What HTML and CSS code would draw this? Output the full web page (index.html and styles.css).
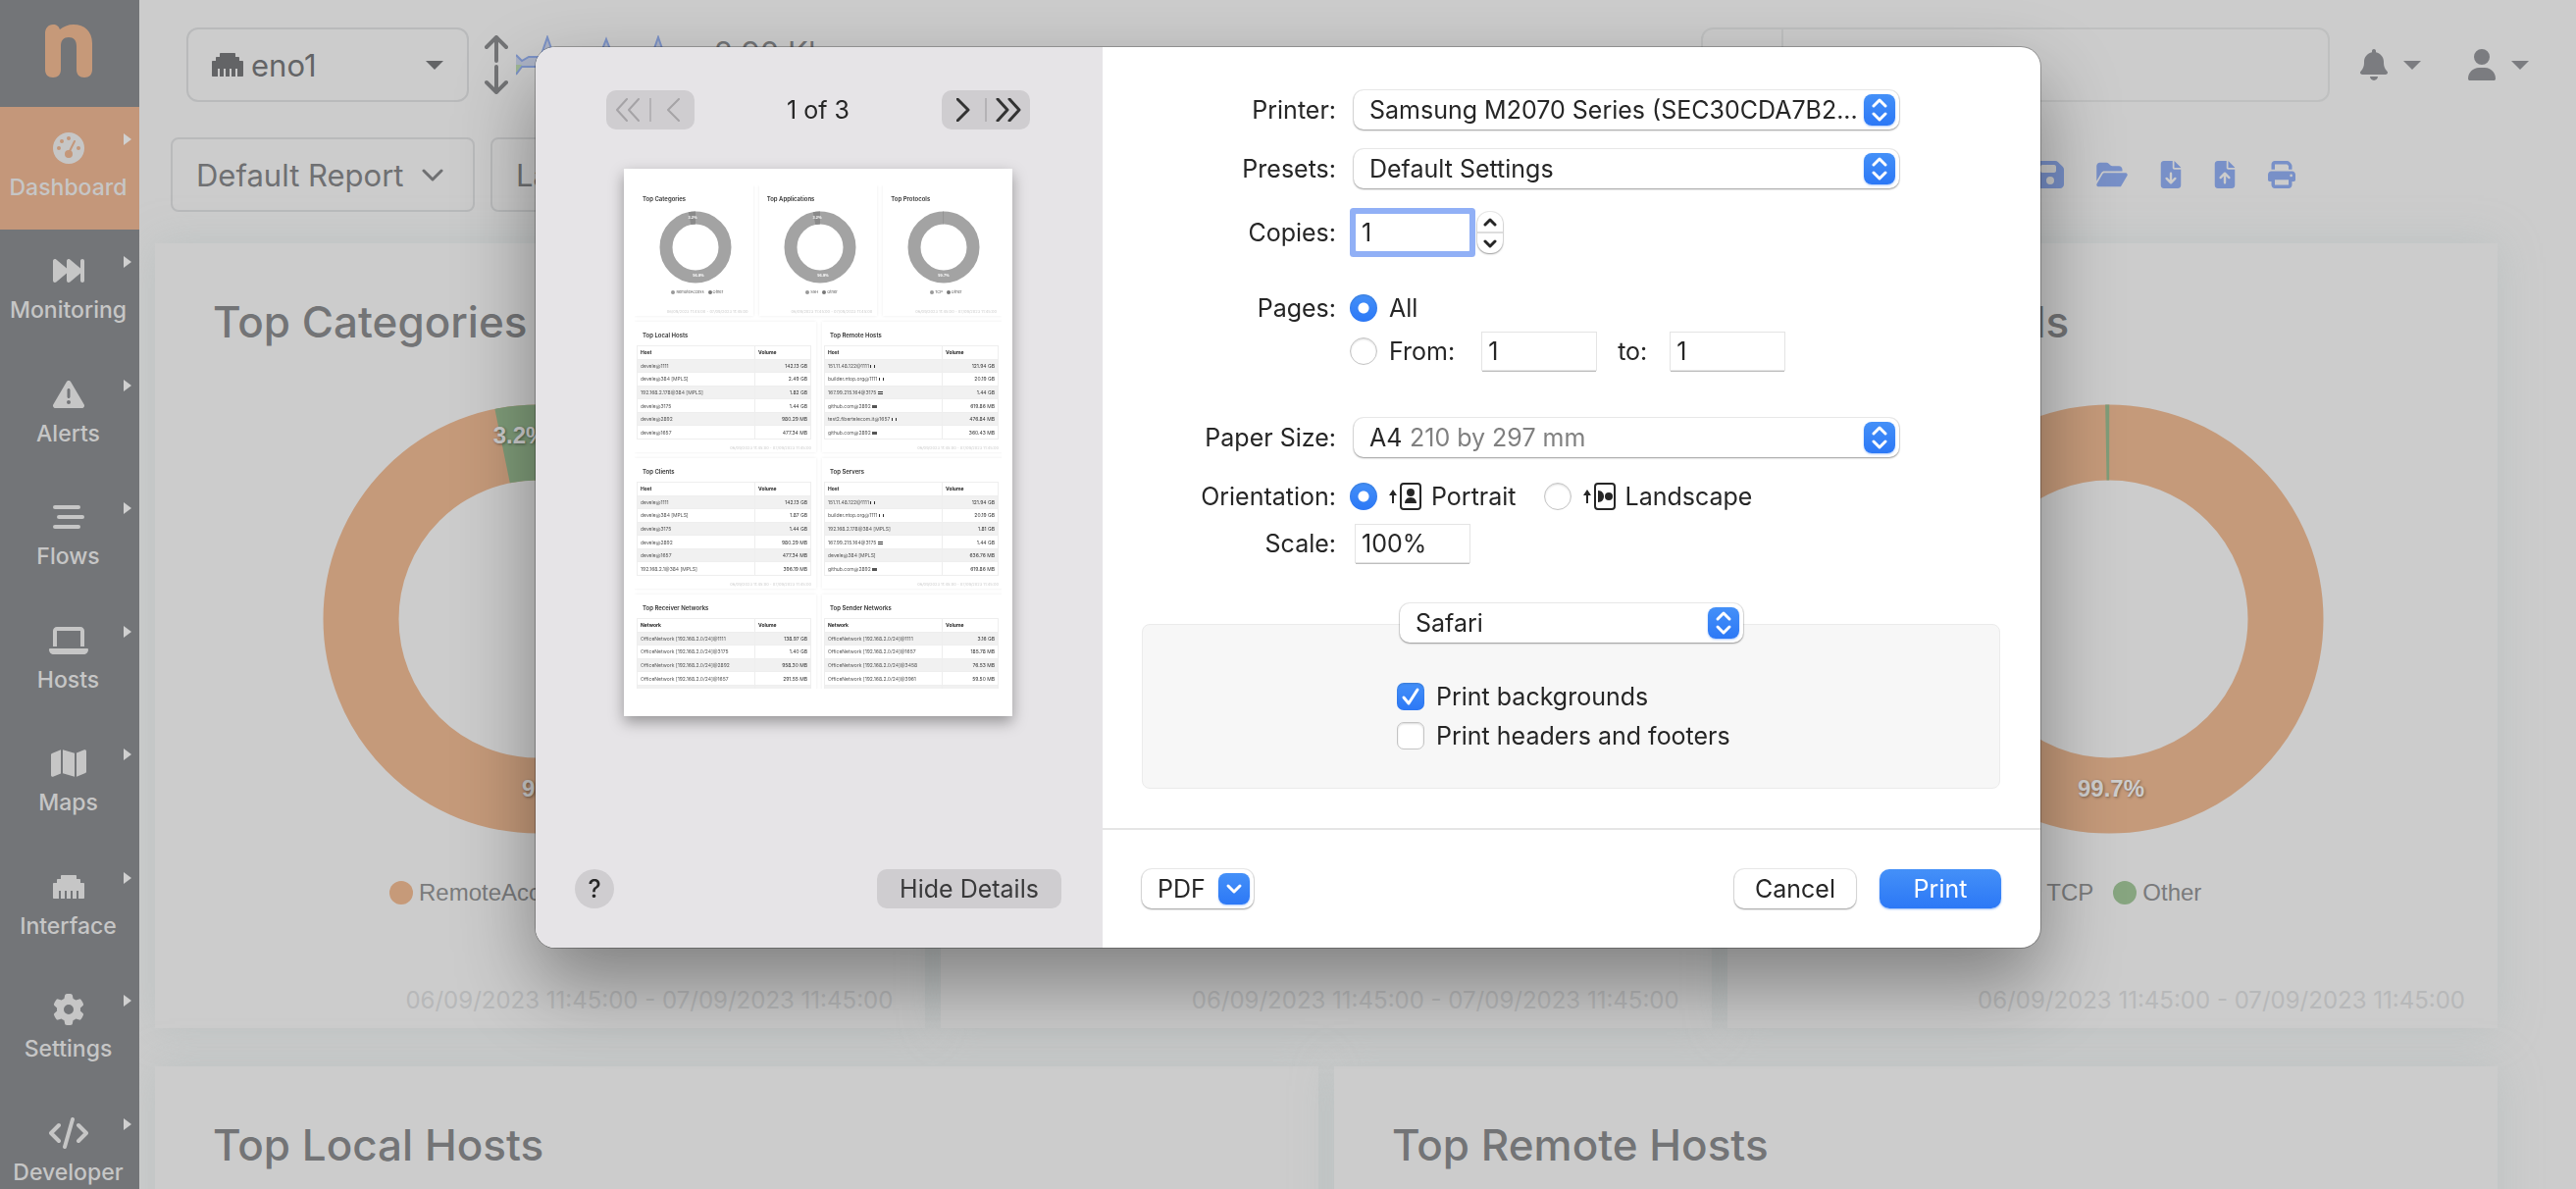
FILE: index.html
```html
<!DOCTYPE html>
<html lang="en">
<head>
<meta charset="utf-8">
<title>Dashboard</title>
<link rel="stylesheet" href="styles.css">
</head>
<body>
<svg class="sprite" aria-hidden="true">
  <symbol id="i-ethernet" viewBox="0 0 512 512"><path d="M512 208v224c0 8.800-7.200 16-16 16H416V320h-32v128h-64V320h-32v128h-64V320h-32v128h-64V320H96v128H16c-8.800 0-16-7.200-16-16V208c0-8.800 7.200-16 16-16h48v-48c0-8.800 7.200-16 16-16h48V80c0-8.800 7.200-16 16-16h224c8.800 0 16 7.200 16 16v48h48c8.800 0 16 7.200 16 16v48h48c8.800 0 16 7.200 16 16z"/></symbol>
  <symbol id="i-file" viewBox="0 0 384 512"><path d="M64 0C28.700 0 0 28.700 0 64V448c0 35.300 28.700 64 64 64H320c35.300 0 64-28.700 64-64V160H256c-17.700 0-32-14.300-32-32V0H64zM256 0V128H384L256 0z"/></symbol>
  <symbol id="i-updown" viewBox="0 0 32 32"><path d="M10 12l6-6 6 6M10 20l6 6 6-6" fill="none" stroke="#fff" stroke-width="3" stroke-linecap="round" stroke-linejoin="round"/></symbol>
</svg>

<nav class="sidebar">
  <a class="logo" href="#" aria-label="Home">
    <svg width="48" height="54" viewBox="0 0 48 54"><path d="M0 9C0 4 3 0 8 0c4 0 6 2 7 5 4-3 8-5 14-5 11 0 19 7 19 19v27c0 5-3 8-8 8s-8-3-8-8V22c0-6-3-9-8-9s-8 3-8 9v24c0 5-3 8-8 8s-8-3-8-8z"/></svg>
  </a>
  <ul class="menu">
    <li class="active"><a href="#"><svg width="32" height="32" viewBox="0 0 32 32"><circle cx="16" cy="16" r="16"/><g class="cut"><circle cx="6" cy="16" r="2"/><circle cx="9" cy="9" r="2"/><circle cx="16" cy="6" r="2"/><circle cx="26" cy="16" r="2"/><circle cx="16" cy="22" r="4"/><path d="M16 21l6-12"/></g></svg>Dashboard</a></li>
    <li><a href="#"><svg width="32" height="32" viewBox="0 0 512 512"><path d="M18.400 445c11.200 5.300 24.500 3.600 34.100-4.400L224 297.700V416c0 12.400 7.200 23.700 18.400 29s24.500 3.600 34.100-4.400L448 297.700V416c0 17.700 14.300 32 32 32s32-14.300 32-32V96c0-17.700-14.300-32-32-32s-32 14.300-32 32V214.300L276.500 71.400c-9.500-7.900-22.800-9.700-34.100-4.400S224 83.600 224 96V214.300L52.500 71.400c-9.500-7.900-22.800-9.700-34.100-4.400S0 83.600 0 96V416c0 12.400 7.200 23.700 18.400 29z"/></svg>Monitoring</a></li>
    <li><a href="#"><svg width="32" height="32" viewBox="0 0 512 512"><path d="M256 32c14.200 0 27.300 7.500 34.500 19.800l216 368c7.300 12.400 7.300 27.700 .2 40.100S486.300 480 472 480H40c-14.300 0-27.600-7.700-34.700-20.100s-7-27.800 .2-40.100l216-368C228.700 39.500 241.800 32 256 32zm0 128c-13.300 0-24 10.700-24 24V296c0 13.300 10.700 24 24 24s24-10.700 24-24V184c0-13.300-10.700-24-24-24zm32 224a32 32 0 1 0-64 0 32 32 0 1 0 64 0z"/></svg>Alerts</a></li>
    <li><a href="#"><svg width="32" height="32" viewBox="0 0 32 32"><rect x="0" y="4" width="28" height="4" rx="2"/><rect x="4" y="14" width="28" height="4" rx="2"/><rect x="0" y="24" width="28" height="4" rx="2"/></svg>Flows</a></li>
    <li><a href="#"><svg width="40" height="32" viewBox="0 0 640 512"><path d="M128 32C92.700 32 64 60.700 64 96V352h64V96H512V352h64V96c0-35.300-28.700-64-64-64H128zM19.200 384C8.600 384 0 392.600 0 403.200C0 445.600 34.400 480 76.800 480H563.200c42.400 0 76.800-34.400 76.800-76.800c0-10.600-8.600-19.200-19.200-19.200H19.200z"/></svg>Hosts</a></li>
    <li><a href="#"><svg width="36" height="32" viewBox="0 0 576 512"><path d="M384 476.100L192 421.200V35.900L384 90.800V476.100zm32-1.200V88.400L543.100 37.500c15.800-6.300 32.900 5.300 32.900 22.300V394.600c0 9.800-6 18.600-15.100 22.300L416 474.800zM15.100 95.100L160 37.200V423.600L32.900 474.500C17.100 480.800 0 469.200 0 452.200V117.400c0-9.800 6-18.600 15.100-22.300z"/></svg>Maps</a></li>
    <li><a href="#"><svg width="32" height="32"><use href="#i-ethernet"/></svg>Interface</a></li>
    <li><a href="#"><svg width="32" height="32" viewBox="0 0 512 512"><path d="M495.900 166.600c3.200 8.700 .5 18.400-6.400 24.600l-43.300 39.400c1.100 8.300 1.700 16.800 1.700 25.400s-.6 17.100-1.700 25.400l43.300 39.400c6.900 6.200 9.600 15.900 6.400 24.600c-4.400 11.900-9.700 23.300-15.800 34.300l-4.700 8.100c-6.600 11-14 21.400-22.100 31.200c-5.900 7.200-15.700 9.600-24.500 6.800l-55.700-17.700c-13.400 10.300-28.200 18.900-44 25.400l-12.500 57.100c-2 9.100-9 16.300-18.200 17.800c-13.800 2.300-28 3.500-42.500 3.500s-28.700-1.200-42.500-3.500c-9.200-1.500-16.200-8.700-18.200-17.800l-12.500-57.100c-15.800-6.500-30.600-15.100-44-25.400L83.100 425.900c-8.800 2.800-18.600 .3-24.500-6.800c-8.100-9.800-15.500-20.200-22.100-31.200l-4.700-8.100c-6.100-11-11.400-22.400-15.800-34.300c-3.200-8.700-.5-18.400 6.400-24.600l43.300-39.400C64.600 273.100 64 264.600 64 256s.6-17.100 1.700-25.400L22.400 191.200c-6.900-6.200-9.600-15.900-6.400-24.600c4.400-11.900 9.700-23.300 15.800-34.300l4.700-8.100c6.600-11 14-21.400 22.100-31.200c5.900-7.200 15.700-9.600 24.500-6.800l55.700 17.700c13.400-10.300 28.200-18.900 44-25.400l12.500-57.100c2-9.100 9-16.300 18.200-17.800C227.300 1.200 241.500 0 256 0s28.700 1.200 42.500 3.500c9.200 1.500 16.200 8.700 18.200 17.800l12.500 57.100c15.800 6.500 30.600 15.100 44 25.400l55.700-17.700c8.800-2.800 18.600-.3 24.500 6.800c8.100 9.800 15.500 20.200 22.100 31.200l4.700 8.100c6.100 11 11.400 22.400 15.800 34.300zM256 336a80 80 0 1 0 0-160 80 80 0 1 0 0 160z"/></svg>Settings</a></li>
    <li><a href="#"><svg width="40" height="32" viewBox="0 0 40 32"><path class="line" d="M10 8l-8 8 8 8M30 8l8 8-8 8M24 2l-8 28"/></svg>Developer</a></li>
  </ul>
</nav>

<main class="main">
  <header class="topbar">
    <div class="pick iface">
      <select aria-label="Interface"><option>eno1</option></select>
      <svg class="pick-icon" width="32" height="32"><use href="#i-ethernet"/></svg>
      <svg class="pick-arrow" width="18" height="9" viewBox="0 0 18 9"><path d="M0 0h18L9 9z"/></svg>
    </div>
    <div class="traffic">
      <svg width="24" height="60" viewBox="0 0 24 60"><path class="line" d="M12 26V3M2 12L12 2l10 10M12 32v25M2 48l10 10 10-10"/></svg>
      <svg width="190" height="60" viewBox="0 0 190 60"><path d="M0 20l6 6 7-4h12l7-20 7 20h46l7-18 7 18h39l7-20 7 20h45v10H6l-6 8z" fill="#adb4c6"/><path d="M0 30h6l-6 9z" fill="#9fb894"/><path d="M0 20l6 6 7-4h12l7-20 7 20h46l7-18 7 18h39l7-20 7 20h45M0 40l6-8h184" fill="none" stroke="#7c92c6" stroke-width="2"/></svg>
      <span class="rate">2.90 Kbps</span>
    </div>
    <div class="search"><button type="button" aria-label="Search type"></button><input type="text" aria-label="Search"></div>
    <button class="icon-btn" type="button" aria-label="Notifications">
      <svg width="28" height="32" viewBox="0 0 448 512"><path d="M224 0c-17.700 0-32 14.300-32 32V51.200C119 66 64 130.600 64 208v18.800c0 47-17.300 92.400-48.500 127.600l-7.400 8.300c-8.400 9.400-10.400 22.900-5.300 34.400S19.400 416 32 416H416c12.600 0 24-7.400 29.200-18.900s3.100-25-5.300-34.400l-7.400-8.300C401.300 319.200 384 273.900 384 226.800V208c0-77.400-55-142-128-156.800V32c0-17.700-14.300-32-32-32zm45.300 493.300c12-12 18.700-28.300 18.700-45.300H224 160c0 17 6.700 33.300 18.700 45.300s28.300 18.700 45.300 18.700s33.300-6.700 45.300-18.700z"/></svg>
      <svg width="18" height="9" viewBox="0 0 18 9"><path d="M0 0h18L9 9z"/></svg>
    </button>
    <button class="icon-btn user" type="button" aria-label="Account">
      <svg width="28" height="32" viewBox="0 0 448 512"><path d="M224 256A128 128 0 1 0 224 0a128 128 0 1 0 0 256zm-45.700 48C79.800 304 0 383.800 0 482.300C0 498.700 13.300 512 29.700 512H418.300c16.400 0 29.700-13.300 29.700-29.700C448 383.800 368.200 304 269.700 304H178.300z"/></svg>
      <svg width="18" height="9" viewBox="0 0 18 9"><path d="M0 0h18L9 9z"/></svg>
    </button>
  </header>

  <div class="toolbar">
    <div class="pick report">
      <select aria-label="Report"><option>Default Report</option></select>
      <svg class="pick-arrow" width="22" height="14" viewBox="0 0 22 14"><path class="line" d="M2 3l9 9 9-9"/></svg>
    </div>
    <div class="pick report">
      <select aria-label="Period"><option>Last Day</option></select>
      <svg class="pick-arrow" width="22" height="14" viewBox="0 0 22 14"><path class="line" d="M2 3l9 9 9-9"/></svg>
    </div>
    <div class="tools">
      <a href="#" aria-label="Save"><svg width="28" height="32" viewBox="0 0 448 512"><path d="M64 32C28.700 32 0 60.700 0 96V416c0 35.300 28.700 64 64 64H384c35.300 0 64-28.700 64-64V173.300c0-17-6.700-33.300-18.700-45.300L352 50.700C340 38.700 323.700 32 306.700 32H64zm0 96c0-17.700 14.300-32 32-32H288c17.700 0 32 14.300 32 32v64c0 17.700-14.300 32-32 32H96c-17.700 0-32-14.300-32-32V128zM224 288a64 64 0 1 1 0 128 64 64 0 1 1 0-128z"/></svg></a>
      <a href="#" aria-label="Open"><svg width="32" height="28" viewBox="0 0 576 512"><path d="M88.700 223.800L0 375.800V96C0 60.700 28.700 32 64 32H181.500c17 0 33.300 6.700 45.300 18.700l26.500 26.500c12 12 28.300 18.700 45.300 18.700H416c35.300 0 64 28.700 64 64v32H144c-22.800 0-43.800 12.100-55.300 31.800zm27.600 16.100C122.100 230 132.600 224 144 224H544c11.500 0 22 6.100 27.700 16.100s5.700 22.200-.1 32.100l-112 192C453.900 474 443.400 480 432 480H32c-11.500 0-22-6.100-27.700-16.100s-5.700-22.200 .1-32.100l112-192z"/></svg></a>
      <a href="#" aria-label="Import"><svg width="22" height="28" viewBox="0 0 384 512"><use href="#i-file"/><path class="arrow" d="M192 232v168M112 328l80 80 80-80"/></svg></a>
      <a href="#" aria-label="Export"><svg width="22" height="28" viewBox="0 0 384 512"><use href="#i-file"/><path class="arrow" d="M192 408V240M112 312l80-80 80 80"/></svg></a>
      <a href="#" aria-label="Print report"><svg width="28" height="28" viewBox="0 0 512 512"><path d="M128 0C92.700 0 64 28.700 64 64v96h64V64H354.700L384 93.300V160h64V93.300c0-17-6.700-33.300-18.700-45.300L400 18.700C388 6.700 371.700 0 354.700 0H128zM384 352v32 64H128V384 368 352H384zm64 32h32c17.700 0 32-14.300 32-32V256c0-35.300-28.700-64-64-64H64c-35.300 0-64 28.700-64 64v96c0 17.700 14.300 32 32 32H64v64c0 35.300 28.700 64 64 64H384c35.300 0 64-28.700 64-64V384zM432 248a24 24 0 1 1 0 48 24 24 0 1 1 0-48z"/></svg></a>
    </div>
  </div>

  <div class="cards thirds">
    <section class="card">
      <h2>Top Categories</h2>
      <svg class="donut" width="438" height="438" viewBox="0 0 438 438"><circle class="a" cx="219" cy="219" r="180"/><circle class="b" cx="219" cy="219" r="180" pathLength="1000" stroke-dasharray="32 968" transform="rotate(-101.500 219 219)"/><text x="201" y="40">3.2%</text><text x="237" y="400">96.8%</text></svg>
      <p class="legend"><i class="dot a"></i>RemoteAccess<i class="dot b"></i>Other</p>
      <p class="range">06/09/2023 11:45:00 - 07/09/2023 11:45:00</p>
    </section>
    <section class="card">
      <h2>Top Applications</h2>
      <svg class="donut" width="438" height="438" viewBox="0 0 438 438"><circle class="a" cx="219" cy="219" r="180"/><circle class="b" cx="219" cy="219" r="180" pathLength="1000" stroke-dasharray="32 968" transform="rotate(-101.500 219 219)"/></svg>
      <p class="legend"><i class="dot a"></i>SSH<i class="dot b"></i>Other</p>
      <p class="range">06/09/2023 11:45:00 - 07/09/2023 11:45:00</p>
    </section>
    <section class="card">
      <h2>Top Protocols</h2>
      <svg class="donut" width="438" height="438" viewBox="0 0 438 438"><circle class="a" cx="219" cy="219" r="180"/><circle class="b" cx="219" cy="219" r="180" pathLength="1000" stroke-dasharray="3 997" transform="rotate(-91 219 219)"/><text x="221" y="400">99.7%</text></svg>
      <p class="legend"><i class="dot a"></i>TCP<i class="dot b"></i>Other</p>
      <p class="range">06/09/2023 11:45:00 - 07/09/2023 11:45:00</p>
    </section>
  </div>
  <div class="cards halves">
    <section class="card"><h2>Top Local Hosts</h2></section>
    <section class="card"><h2>Top Remote Hosts</h2></section>
  </div>
</main>

<div class="overlay">
<form class="dialog" role="dialog" aria-label="Print">
  <div class="preview-pane">
    <div class="pager">
      <div class="seg">
        <button type="button" disabled aria-label="First page"><svg width="26" height="24" viewBox="0 0 26 24"><path d="M12 1L2 12l10 11M24 1L14 12l10 11"/></svg></button>
        <button type="button" disabled aria-label="Previous page"><svg width="14" height="24" viewBox="0 0 14 24"><path d="M13 1L2 12l11 11"/></svg></button>
      </div>
      <span>1 of 3</span>
      <div class="seg">
        <button type="button" aria-label="Next page"><svg width="14" height="24" viewBox="0 0 14 24"><path d="M1 1l11 11L1 23"/></svg></button>
        <button type="button" aria-label="Last page"><svg width="26" height="24" viewBox="0 0 26 24"><path d="M2 1l10 11L2 23M14 1l10 11-10 11"/></svg></button>
      </div>
    </div>

    <div class="sheet"><div class="sheet-body">
      <div class="s-row s3">
        <section><h3>Top Categories</h3>
          <svg class="s-donut" width="74" height="74" viewBox="0 0 74 74"><circle cx="37" cy="37" r="30"/><circle class="b" cx="37" cy="37" r="30" pathLength="1000" stroke-dasharray="32 968" transform="rotate(-101.500 37 37)"/><text x="34" y="8">3.2%</text><text x="40" y="67">96.8%</text></svg>
          <p class="s-legend"><i class="a"></i>RemoteAccess<i></i>Other</p><p class="s-range">06/09/2023 11:45:00 - 07/09/2023 11:45:00</p></section>
        <section><h3>Top Applications</h3>
          <svg class="s-donut" width="74" height="74" viewBox="0 0 74 74"><circle cx="37" cy="37" r="30"/><circle class="b" cx="37" cy="37" r="30" pathLength="1000" stroke-dasharray="32 968" transform="rotate(-101.500 37 37)"/><text x="34" y="8">3.2%</text><text x="40" y="67">96.8%</text></svg>
          <p class="s-legend"><i class="a"></i>SSH<i></i>Other</p><p class="s-range">06/09/2023 11:45:00 - 07/09/2023 11:45:00</p></section>
        <section><h3>Top Protocols</h3>
          <svg class="s-donut" width="74" height="74" viewBox="0 0 74 74"><circle cx="37" cy="37" r="30"/><circle class="b" cx="37" cy="37" r="30" pathLength="1000" stroke-dasharray="3 997" transform="rotate(-91 37 37)"/><text x="37" y="67">99.7%</text></svg>
          <p class="s-legend"><i class="a"></i>TCP<i></i>Other</p><p class="s-range">06/09/2023 11:45:00 - 07/09/2023 11:45:00</p></section>
      </div>
      <div class="s-row s2">
        <section><h3>Top Local Hosts</h3>
          <table><tr><th>Host</th><th>Volume</th></tr><tr><td>devele@1111</td><td>142.13 GB</td></tr><tr><td>devele@384 [MPLS]</td><td>2.49 GB</td></tr><tr><td>192.168.2.178@384 [MPLS]</td><td>1.82 GB</td></tr><tr><td>devele@3175</td><td>1.44 GB</td></tr><tr><td>devele@2892</td><td>980.29 MB</td></tr><tr><td>devele@1657</td><td>477.34 MB</td></tr></table>
          <p class="s-range">06/09/2023 11:45:00 - 07/09/2023 11:45:00</p></section>
        <section><h3>Top Remote Hosts</h3>
          <table><tr><th>Host</th><th>Volume</th></tr><tr><td>151.11.48.122@1111 <i class="it"></i></td><td>121.94 GB</td></tr><tr><td>builder.ntop.org@1111 <i class="it"></i></td><td>20.19 GB</td></tr><tr><td>167.99.215.164@3175 <i class="nl"></i></td><td>1.44 GB</td></tr><tr><td>github.com@2892 <i class="us"></i></td><td>619.86 MB</td></tr><tr><td>test2.fibertelecom.it@1657 <i class="it"></i></td><td>476.84 MB</td></tr><tr><td>github.com@2892 <i class="us"></i></td><td>360.43 MB</td></tr></table>
          <p class="s-range">06/09/2023 11:45:00 - 07/09/2023 11:45:00</p></section>
      </div>
      <div class="s-row s2">
        <section><h3>Top Clients</h3>
          <table><tr><th>Host</th><th>Volume</th></tr><tr><td>devele@1111</td><td>142.13 GB</td></tr><tr><td>devele@384 [MPLS]</td><td>1.87 GB</td></tr><tr><td>devele@3175</td><td>1.44 GB</td></tr><tr><td>devele@2892</td><td>980.29 MB</td></tr><tr><td>devele@1657</td><td>477.34 MB</td></tr><tr><td>192.168.2.1@384 [MPLS]</td><td>396.19 MB</td></tr></table>
          <p class="s-range">06/09/2023 11:45:00 - 07/09/2023 11:45:00</p></section>
        <section><h3>Top Servers</h3>
          <table><tr><th>Host</th><th>Volume</th></tr><tr><td>151.11.48.122@1111 <i class="it"></i></td><td>121.94 GB</td></tr><tr><td>builder.ntop.org@1111 <i class="it"></i></td><td>20.19 GB</td></tr><tr><td>192.168.2.178@384 [MPLS]</td><td>1.81 GB</td></tr><tr><td>167.99.215.164@3175 <i class="nl"></i></td><td>1.44 GB</td></tr><tr><td>devele@384 [MPLS]</td><td>636.76 MB</td></tr><tr><td>github.com@2892 <i class="us"></i></td><td>619.86 MB</td></tr></table>
          <p class="s-range">06/09/2023 11:45:00 - 07/09/2023 11:45:00</p></section>
      </div>
      <div class="s-row s2">
        <section><h3>Top Receiver Networks</h3>
          <table><tr><th>Network</th><th>Volume</th></tr><tr><td>OfficeNetwork [192.168.2.0/24]@1111</td><td>138.97 GB</td></tr><tr><td>OfficeNetwork [192.168.2.0/24]@3175</td><td>1.40 GB</td></tr><tr><td>OfficeNetwork [192.168.2.0/24]@2892</td><td>958.30 MB</td></tr><tr><td>OfficeNetwork [192.168.2.0/24]@1657</td><td>291.55 MB</td></tr><tr><td>&nbsp;</td><td></td></tr><tr><td>&nbsp;</td><td></td></tr></table></section>
        <section><h3>Top Sender Networks</h3>
          <table><tr><th>Network</th><th>Volume</th></tr><tr><td>OfficeNetwork [192.168.2.0/24]@1111</td><td>3.16 GB</td></tr><tr><td>OfficeNetwork [192.168.2.0/24]@1657</td><td>185.78 MB</td></tr><tr><td>OfficeNetwork [192.168.2.0/24]@3458</td><td>76.53 MB</td></tr><tr><td>OfficeNetwork [192.168.2.0/24]@3961</td><td>59.50 MB</td></tr><tr><td>&nbsp;</td><td></td></tr><tr><td>&nbsp;</td><td></td></tr></table></section>
      </div>
    </div></div>

    <div class="pane-foot">
      <button class="help" type="button">?</button>
      <button class="hide" type="button">Hide Details</button>
    </div>
  </div>

  <div class="options">
    <div class="fields">
      <div class="row"><label for="printer">Printer:</label>
        <div class="popup"><select id="printer"><option>Samsung M2070 Series (SEC30CDA7B2...</option></select><svg class="badge"><use href="#i-updown"/></svg></div></div>
      <div class="row g20"><label for="presets">Presets:</label>
        <div class="popup"><select id="presets"><option>Default Settings</option></select><svg class="badge"><use href="#i-updown"/></svg></div></div>
      <div class="row g20 copies"><label for="copies">Copies:</label>
        <div class="controls"><input class="box focused" id="copies" type="text" value="1">
          <div class="stepper"><button type="button" aria-label="More"><svg width="14" height="9" viewBox="0 0 14 9"><path d="M2 7l5-5 5 5"/></svg></button><button type="button" aria-label="Fewer"><svg width="14" height="9" viewBox="0 0 14 9"><path d="M2 2l5 5 5-5"/></svg></button></div></div></div>
      <div class="row g32"><span class="lbl">Pages:</span>
        <div class="controls"><label class="opt"><input type="radio" name="pages" checked>All</label></div></div>
      <div class="row g4"><span></span>
        <div class="controls"><label class="opt"><input type="radio" name="pages">From:</label><input class="box from" type="text" value="1" aria-label="From page"><label class="to" for="to">to:</label><input class="box" id="to" type="text" value="1"></div></div>
      <div class="row g48"><label for="paper">Paper Size:</label>
        <div class="popup"><select id="paper"><option>A4</option></select><span class="sub">210 by 297 mm</span><svg class="badge"><use href="#i-updown"/></svg></div></div>
      <div class="row g20"><span class="lbl">Orientation:</span>
        <div class="controls orient">
          <label class="opt"><input type="radio" name="orient" checked><svg width="33" height="28" viewBox="0 0 33 28"><path d="M4 21v-9" stroke="#262626" stroke-width="2"/><path d="M0 13l4-6 4 6z"/><rect x="12" y="1" width="20" height="26" rx="3" fill="none" stroke="#262626" stroke-width="2"/><circle cx="22" cy="10" r="4"/><path d="M16 21c0-3 2-6 6-6s6 3 6 6z"/></svg>Portrait</label>
          <label class="opt"><input type="radio" name="orient"><svg width="33" height="28" viewBox="0 0 33 28"><path d="M4 21v-9" stroke="#262626" stroke-width="2"/><path d="M0 13l4-6 4 6z"/><rect x="12" y="1" width="20" height="26" rx="3" fill="none" stroke="#262626" stroke-width="2"/><circle cx="26" cy="14" r="4"/><path d="M15 8c4 0 6 3 6 6s-2 6-6 6z"/></svg>Landscape</label>
        </div></div>
      <div class="row g8"><label for="scale">Scale:</label><div class="controls"><input class="box" id="scale" type="text" value="100%"></div></div>
      <div class="group">
        <div class="popup app"><select aria-label="Options for"><option>Safari</option></select><svg class="badge"><use href="#i-updown"/></svg></div>
        <label class="opt"><input type="checkbox" checked>Print backgrounds</label>
        <label class="opt"><input type="checkbox">Print headers and footers</label>
      </div>
    </div>
    <div class="actions">
      <button class="btn pdf" type="button">PDF<svg class="badge" viewBox="0 0 32 32"><path d="M10 13l6 6 6-6" fill="none" stroke="#fff" stroke-width="3" stroke-linecap="round" stroke-linejoin="round"/></svg></button>
      <button class="btn" type="button">Cancel</button>
      <button class="btn primary" type="submit">Print</button>
    </div>
  </div>
</form>
</div>
</body>
</html>
```
FILE: styles.css
```css
* { box-sizing: border-box; }
body {
  margin: 0; height: 100vh; overflow: hidden; display: flex;
  background: #ccc; color: #737476;
  font-family: Inter, "Liberation Sans", sans-serif; font-size: 24px;
}
h2, h3, p, ul { margin: 0; padding: 0; }
button, input, select { font: inherit; color: inherit; margin: 0; padding: 0; border: 0; background: none; }
a { color: inherit; text-decoration: none; }
svg { display: block; flex: none; fill: currentColor; }
.sprite { position: absolute; width: 0; height: 0; }
.line { fill: none; stroke: currentColor; stroke-width: 4; stroke-linecap: round; stroke-linejoin: round; }

/* sidebar */
.sidebar { width: 142px; flex: none; overflow: hidden; background: #737578; color: #c6c6c6; }
.logo { display: flex; justify-content: center; padding: 25px 2px 0 0; height: 109px; color: #c69979; }
.menu { list-style: none; }
.menu li { position: relative; height: 126px; }
.menu li:nth-child(odd) { height: 125px; }
.menu a { display: flex; flex-direction: column; align-items: center; padding: 26px 3px 0 0; gap: 10px; font-size: 23px; line-height: 28px; font-weight: 500; }
.menu li::after {
  content: ""; position: absolute; right: 8px; top: 27px;
  border-left: 8px solid #d0d0d0; border-top: 6px solid transparent; border-bottom: 6px solid transparent;
}
.menu .active { background: #c4977a; }
.cut { fill: #c4977a; stroke-linecap: round; }
.cut path { stroke: #c4977a; stroke-width: 2; }

/* page */
.main { flex: 1; min-width: 0; overflow: hidden; }
.topbar { display: flex; align-items: center; padding: 28px 48px 0; height: 104px; }
.pick { display: grid; align-items: center; height: 76px; color: #636466; font-size: 31px; }
.pick > * { grid-area: 1 / 1; }
.pick select { appearance: none; height: 100%; width: 100%; border: 2px solid #b9babb; border-radius: 8px; padding-left: 24px; }
.pick-arrow { justify-self: end; margin-right: 26px; pointer-events: none; }
.pick-icon { margin-left: 26px; }
.iface { width: 288px; }
.iface select { border-radius: 12px; padding-left: 64px; }
.report { width: 310px; color: #6f7072; }
.report .pick-arrow { margin-right: 32px; }
.report .line { stroke-width: 3; }
.traffic { display: flex; align-items: center; margin-left: 16px; gap: 8px; }
.rate { align-self: flex-start; font-size: 31px; line-height: 36px; margin-left: 4px; }
.search { display: flex; flex: 0 1 641px; height: 76px; margin: 0 31px 0 auto; border: 2px solid #bfc0c0; border-radius: 12px; }
.search button { width: 82px; border-right: 2px solid #bfc0c0; }
.search input { flex: 1; min-width: 0; padding: 0 16px; }
.icon-btn { display: flex; align-items: center; gap: 16px; color: #7b7c80; }
.icon-btn.user { margin-left: 48px; }
.toolbar { display: flex; align-items: center; gap: 16px; padding: 36px 286px 0 32px; }
.tools { display: flex; align-items: center; gap: 33px; margin-left: auto; color: #7890c8; }
.arrow { fill: none; stroke: #ccc; stroke-width: 44; stroke-linecap: round; stroke-linejoin: round; }
.cards { display: grid; gap: 16px; padding: 32px 80px 0 16px; }
.thirds { grid-template-columns: repeat(3, 1fr); }
.halves { grid-template-columns: repeat(2, 1fr); padding-top: 39px; }
.card { background: #ccc; padding: 52px 33px 12px 27px; box-shadow: 0 0 40px rgba(165, 180, 180, .4); min-height: 400px; }
.card h2 { padding-left: 32px; font-size: 44px; line-height: 56px; font-weight: 500; }
.donut { margin: 56px auto 46px; fill: none; stroke-width: 77; }
circle.a { stroke: #c59a7a; }
circle.b { stroke: #7f9c79; }
.donut text { fill: #cdcdcd; stroke: none; font: bold 24px "Liberation Sans", sans-serif; text-anchor: middle; text-shadow: 1px 1px 3px rgba(0, 0, 0, .4); }
.legend { display: flex; justify-content: center; align-items: center; font-family: "Liberation Sans", sans-serif; line-height: 28px; color: #7a7b7c; }
.dot { width: 24px; height: 24px; border-radius: 50%; margin-right: 6px; }
.dot.a { background: #c69a79; }
.dot.b { background: #87a580; margin-left: 20px; }
.range { margin-top: 80px; line-height: 32px; text-align: right; color: #b7b8b9; }

/* print dialog */
.overlay { position: fixed; inset: 0; display: flex; justify-content: center; align-items: flex-start; padding: 48px 40px; }
.dialog {
  display: flex; width: 100%; max-width: 1534px; border-radius: 20px; overflow: hidden;
  background: #fff; color: #262626; font-size: 25px; line-height: 30px;
  box-shadow: 0 0 0 1px rgba(0, 0, 0, .25), 0 36px 80px rgba(0, 0, 0, .38);
}
.preview-pane { flex: 0 0 578px; display: flex; flex-direction: column; padding: 44px 42px 40px 40px; background: #e6e4e7; }
.pager { display: flex; justify-content: space-between; align-items: center; padding: 0 32px; }
.seg { display: flex; align-items: center; width: 90px; height: 40px; border-radius: 10px; background: #cfcdd0; }
.seg button { flex: 1; height: 24px; display: flex; justify-content: center; }
.seg button + button { border-left: 2px solid #b4b2b5; }
.seg path { fill: none; stroke: #333; stroke-width: 3; stroke-linecap: round; stroke-linejoin: round; }
.seg :disabled path { stroke: #a5a3a6; stroke-width: 2; }
.pane-foot { display: flex; justify-content: space-between; margin-top: auto; }
.help { width: 40px; height: 40px; border-radius: 50%; background: #cfcdd0; font-weight: 500; }
.hide { width: 188px; height: 40px; border-radius: 10px; background: #cfcdd0; color: #3a3a3b; }

/* page thumbnail */
.sheet { width: 396px; height: 558px; margin: 40px auto 0; padding: 17px 11px 28px; background: #fff; color: #333; font-size: 5px; line-height: 6px; box-shadow: 0 6px 14px rgba(0, 0, 0, .35); }
.sheet-body { height: 513px; overflow: hidden; }
.s-row { display: grid; gap: 6px; margin-bottom: 6px; }
.s3 { grid-template-columns: repeat(3, 1fr); }
.s2 { grid-template-columns: repeat(2, 1fr); }
.s-row section { padding: 10px 5px 1px 2px; height: 133px; box-shadow: 0 0 3px rgba(0, 0, 0, .08); }
.s-row h3 { font-size: 6px; line-height: 8px; font-weight: 600; padding-left: 6px; }
.s-donut { margin: 8px auto 6px 23px; fill: none; stroke-width: 13; stroke: #a3a3a3; }
.s-donut .b { stroke: #8a8a8a; }
.s-donut text { fill: #fff; stroke: none; font: bold 4px "Liberation Sans", sans-serif; text-anchor: middle; }
.s-legend { display: flex; justify-content: center; align-items: center; padding-left: 6px; font-size: 4px; color: #555; }
.s-legend i { width: 4px; height: 4px; border-radius: 50%; background: #777; margin: 0 1px 0 4px; }
.s-legend .a { background: #999; }
.s-range { font-size: 4px; text-align: right; color: #ccc; margin-top: 6px; }
.s3 .s-range { margin-top: 14px; }
.sheet table { width: 177px; height: 96px; margin-top: 6px; border-collapse: collapse; table-layout: fixed; color: #555; }
.sheet th, .sheet td { padding: 0 3px; border: 1px solid #eee; white-space: nowrap; text-align: left; }
.sheet th { color: #222; width: 57px; }
.sheet th:first-child { width: 120px; }
.sheet td:last-child { text-align: right; color: #333; }
.sheet tr:nth-child(even) { background: #f1f1f1; }
.sheet td i { display: inline-block; width: 5px; height: 3px; }
.it { border: solid #333; border-width: 0 1px; }
.nl { border: solid #333; border-width: 1px 0; }
.us { background: #555; }

/* print options */
.options { flex: 1; min-width: 0; display: flex; flex-direction: column; }
.fields { padding: 44px 41px 40px 40px; }
.row { display: grid; grid-template-columns: 198px 1fr; column-gap: 14px; align-items: center; min-height: 40px; }
.row > label, .lbl { text-align: right; }
.g4 { margin-top: 4px; }
.g8 { margin-top: 8px; }
.g20 { margin-top: 20px; }
.g32 { margin-top: 32px; }
.g48 { margin-top: 48px; }
.copies { height: 50px; }
.popup { display: grid; align-items: center; width: 556px; height: 40px; margin-left: 4px; border-radius: 10px; background: #fff; box-shadow: 0 0 0 1px rgba(0, 0, 0, .08), 0 1px 2px rgba(0, 0, 0, .35); }
.popup > * { grid-area: 1 / 1; }
.popup select { appearance: none; width: 100%; height: 40px; padding: 0 36px 0 16px; }
.sub { margin-left: 57px; color: #808080; pointer-events: none; }
.badge { width: 32px; height: 32px; border-radius: 8px; justify-self: end; margin-right: 4px; background: linear-gradient(#4490f8, #2c78f6); box-shadow: 0 1px 2px rgba(44, 120, 246, .4); pointer-events: none; }
.controls { display: flex; align-items: center; }
.box { width: 116px; height: 38px; margin-left: 6px; padding: 0 6px; background: #fff; box-shadow: 0 0 0 1px #e4e4e4, 0 2px 0 #bdbdbd; outline: none; }
.box.focused { box-shadow: 0 0 0 6px #91b0f6; border-radius: 1px; }
.stepper { display: flex; flex-direction: column; width: 26px; height: 42px; margin-left: 8px; border-radius: 12px; box-shadow: 0 0 0 1px rgba(0, 0, 0, .08), 0 1px 2px rgba(0, 0, 0, .35); }
.stepper button { flex: 1; display: flex; align-items: center; justify-content: center; }
.stepper button + button { border-top: 2px solid #ddd; }
.stepper path { fill: none; stroke: #262626; stroke-width: 3; stroke-linecap: round; stroke-linejoin: round; }
.opt { display: flex; align-items: center; height: 40px; }
.opt input { appearance: none; width: 28px; height: 28px; margin-right: 12px; background: #fff; border: 1px solid #c4c4c4; box-shadow: inset 0 1px 2px rgba(0, 0, 0, .15); }
.opt [type=radio] { border-radius: 50%; }
.opt [type=radio]:checked { border: 0; background: radial-gradient(circle, #fff 5px, transparent 6px), linear-gradient(#4490f8, #2c78f6); }
.opt [type=checkbox] { border-radius: 7px; }
.opt [type=checkbox]:checked { border: 0; background: url("data:image/svg+xml,%3Csvg xmlns='http://www.w3.org/2000/svg' viewBox='0 0 28 28'%3E%3Cpath d='M7 15l5 6 9-14' fill='none' stroke='white' stroke-width='3' stroke-linecap='round' stroke-linejoin='round'/%3E%3C/svg%3E"), linear-gradient(#4490f8, #2c78f6); }
.from { margin-left: 28px; }
.to { margin-left: 22px; }
.to + .box { margin-left: 24px; }
.orient { gap: 28px; }
.orient svg { margin-right: 10px; }
.group { margin-top: 62px; height: 168px; padding-left: 259px; border: 1px solid #ebebeb; border-radius: 8px; background: #f7f7f7; }
.group .app { width: 350px; margin: -22px 0 35px 3px; }
.actions { display: flex; gap: 24px; padding: 40px; border-top: 2px solid #e5e5e5; }
.btn { height: 40px; width: 124px; border-radius: 10px; background: #fff; box-shadow: 0 0 0 1px rgba(0, 0, 0, .08), 0 1px 2px rgba(0, 0, 0, .35); }
.btn.pdf { width: 114px; display: flex; align-items: center; justify-content: space-between; padding-left: 16px; margin-right: auto; }
.btn.primary { color: #fff; background: linear-gradient(#4490f8, #2c78f6); box-shadow: 0 1px 2px rgba(44, 120, 246, .5); }
```
